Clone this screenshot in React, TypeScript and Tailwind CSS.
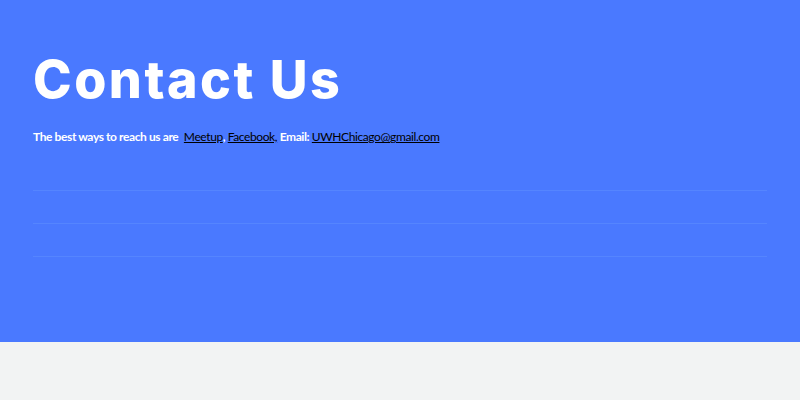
export default function App() {
  return (
    <div className="min-h-[400px] bg-[#f2f3f3]">
      <section className="h-[342px] bg-[#4a79ff] px-[33px] pt-[50px]">
        <h1
          className="text-[52px] leading-[60px] font-extrabold text-white tracking-[2.5px]"
          style={{ fontFamily: "Inter, 'Open Sans', sans-serif" }}
        >
          Contact Us
        </h1>
        <p
          className="mt-[19px] text-[12px] leading-[16px] text-white font-bold tracking-[-0.4px]"
          style={{ fontFamily: "Lato, sans-serif" }}
        >
          The best ways to reach us are{" "}
          <span className="ml-[3px]"></span>
          <a className="text-black underline font-normal">Meetup</a>,{" "}
          <a className="text-black underline font-normal">Facebook,</a> Email:{" "}
          <a className="text-black underline font-normal">UWHChicago@gmail.com</a>
        </p>
        <div className="mt-[45px] flex flex-col">
          <div className="h-px bg-[#5585ff]" />
          <div className="h-px bg-[#5585ff] mt-[32px]" />
          <div className="h-px bg-[#5585ff] mt-[32px]" />
        </div>
      </section>
    </div>
  );
}
